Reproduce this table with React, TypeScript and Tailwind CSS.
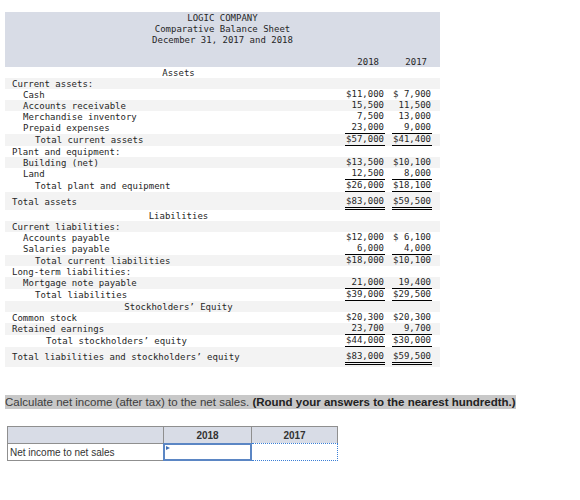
type Line = {
  label: string;
  indent?: number;
  heading?: boolean;
  a?: string;
  b?: string;
  rule?: number;
  shade?: boolean;
};

const lines: Line[] = [
  { label: "Assets", heading: true },
  { label: "Current assets:", indent: 0, shade: true },
  { label: "Cash", indent: 1, a: "$11,000", b: "$ 7,900" },
  { label: "Accounts receivable", indent: 1, a: "15,500", b: "11,500", shade: true },
  { label: "Merchandise inventory", indent: 1, a: "7,500", b: "13,000" },
  { label: "Prepaid expenses", indent: 1, a: "23,000", b: "9,000", rule: 1 },
  { label: "Total current assets", indent: 2, a: "$57,000", b: "$41,400", rule: 1, shade: true },
  { label: "Plant and equipment:", indent: 0 },
  { label: "Building (net)", indent: 1, a: "$13,500", b: "$10,100", shade: true },
  { label: "Land", indent: 1, a: "12,500", b: "8,000", rule: 1 },
  { label: "Total plant and equipment", indent: 2, a: "$26,000", b: "$18,100", rule: 1 },
  { label: "Total assets", indent: 0, a: "$83,000", b: "$59,500", rule: 2, shade: true },
  { label: "Liabilities", heading: true },
  { label: "Current liabilities:", indent: 0, shade: true },
  { label: "Accounts payable", indent: 1, a: "$12,000", b: "$ 6,100" },
  { label: "Salaries payable", indent: 1, a: "6,000", b: "4,000", rule: 1 },
  { label: "Total current liabilities", indent: 2, a: "$18,000", b: "$10,100", shade: true },
  { label: "Long-term liabilities:", indent: 0 },
  { label: "Mortgage note payable", indent: 1, a: "21,000", b: "19,400", rule: 1, shade: true },
  { label: "Total liabilities", indent: 2, a: "$39,000", b: "$29,500", rule: 1 },
  { label: "Stockholders’ Equity", heading: true, shade: true },
  { label: "Common stock", indent: 0, a: "$20,300", b: "$20,300" },
  { label: "Retained earnings", indent: 0, a: "23,700", b: "9,700", rule: 1, shade: true },
  { label: "Total stockholders’ equity", indent: 3, a: "$44,000", b: "$30,000", rule: 1 },
  { label: "Total liabilities and stockholders’ equity", indent: 0, a: "$83,000", b: "$59,500", rule: 2, shade: true },
];

const indents = ["pl-[7px]", "pl-[18px]", "pl-[30px]", "pl-[41px]"];

function Amount({ value, rule }: { value?: string; rule?: number }) {
  const line =
    rule === 1
      ? "border-b border-black"
      : rule === 2
        ? "border-b-[3px] border-double border-black"
        : "";
  return (
    <div className={`w-[40px] text-right pr-[1px] whitespace-pre ${line}`}>
      {value ?? ""}
    </div>
  );
}

function SheetRow({ line, last }: { line: Line; last: boolean }) {
  const bg = line.shade ? "bg-[#f3f3f3]" : "bg-white";
  const pad = line.rule === 2 ? "pt-[4px]" : "";
  const end = last ? "pb-[2px]" : "";
  return (
    <div className={`flex items-start ${bg} ${pad} ${end}`}>
      {line.heading ? (
        <div className="flex-1 pl-[7px] text-center">
          <span className="relative top-[1px]">{line.label}</span>
        </div>
      ) : (
        <div className={`flex-1 whitespace-pre ${indents[line.indent ?? 0]}`}>
          <span className="relative top-[1px]">{line.label}</span>
        </div>
      )}
      <Amount value={line.a} rule={line.rule} />
      <div className="w-[7px]" />
      <Amount value={line.b} rule={line.rule} />
      <div className="w-[8px]" />
    </div>
  );
}

export default function App() {
  return (
    <div className="w-[580px] h-[500px] bg-white overflow-hidden pt-[12px]">
      <div className="ml-[5px] w-[435px] font-['DejaVu_Sans_Mono',monospace] text-[9px] leading-[11px] text-[#262626]">
        <div className="h-[55px] bg-[#d8dce6] flex flex-col">
          <div className="text-center relative top-[1px]">LOGIC COMPANY</div>
          <div className="text-center relative top-[1px]">Comparative Balance Sheet</div>
          <div className="text-center relative top-[1px]">December 31, 2017 and 2018</div>
          <div className="mt-auto flex relative top-[1px]">
            <div className="flex-1" />
            <div className="w-[40px] text-right pr-[6px]">2018</div>
            <div className="w-[7px]" />
            <div className="w-[40px] text-right pr-[5px]">2017</div>
            <div className="w-[8px]" />
          </div>
        </div>
        {lines.map((line, i) => (
          <SheetRow key={i} line={line} last={i === lines.length - 1} />
        ))}
      </div>

      <div className="mt-[28px] ml-[5px] flex font-['Liberation_Sans',Arial,sans-serif] text-[11.5px] leading-[14px] text-[#3c3c3c]">
        <span className="bg-[#c8c8c8] whitespace-nowrap">
          Calculate net income (after tax) to the net sales.{" "}
          <b className="font-bold text-[#222]">(Round your answers to the nearest hundredth.)</b>
        </span>
      </div>

      <div className="mt-[17px] ml-[7px] w-[331px] font-['Liberation_Sans',Arial,sans-serif] text-[10px] text-[#333]">
        <div className="flex h-[18px] border border-[#8f8f8f] bg-[#d8dce6] font-bold">
          <div className="w-[156px] border-r border-[#8f8f8f]" />
          <div className="w-[88px] border-r border-[#8f8f8f] flex items-center justify-center">2018</div>
          <div className="flex-1 flex items-center justify-center">2017</div>
        </div>
        <div className="flex h-[18px] -mt-[1px]">
          <div className="w-[156px] border-l border-b border-[#8f8f8f] flex items-center pl-[2px] pt-[1px]">
            Net income to net sales
          </div>
          <div className="relative w-[89px] border-2 border-[#5b86c4] bg-white">
            <svg className="absolute left-[1px] top-[1px]" width="5" height="5" viewBox="0 0 5 5">
              <polygon points="0,0 4,2 0,4" fill="#3f6fb5" />
            </svg>
          </div>
          <div className="w-[86px] border-t border-r border-b border-dotted border-[#3b7fd6] bg-white" />
        </div>
      </div>
    </div>
  );
}
